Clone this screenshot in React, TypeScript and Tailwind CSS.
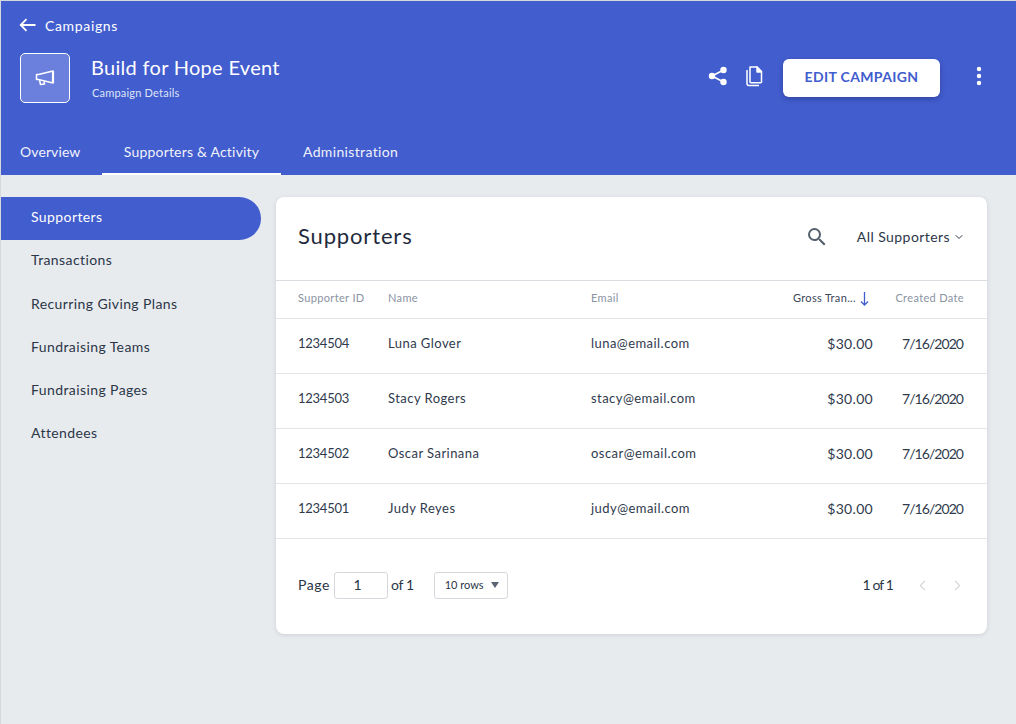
import { ChevronDown, ChevronLeft, ChevronRight, MoreVertical } from "lucide-react";

const sideItems = ["Supporters", "Transactions", "Recurring Giving Plans", "Fundraising Teams", "Fundraising Pages", "Attendees"];

const rows = [
  { id: "1234504", name: "Luna Glover", email: "luna@email.com" },
  { id: "1234503", name: "Stacy Rogers", email: "stacy@email.com" },
  { id: "1234502", name: "Oscar Sarinana", email: "oscar@email.com" },
  { id: "1234501", name: "Judy Reyes", email: "judy@email.com" },
];

export default function App() {
  return (
    <div className="w-[1016px] h-[724px] overflow-hidden bg-[#e8ebee] border-t border-l border-[#d5d8dc] font-['Lato',sans-serif] text-[#2b3648]">
      {/* Header */}
      <header className="h-[174px] bg-[#425dce] text-white flex flex-col">
        <div className="flex items-center pl-[18px] pt-[13px] pb-[1px] h-[36px]">
          <svg width="17" height="14" viewBox="0 0 17 14" fill="none" stroke="white" strokeWidth="1.8">
            <path d="M16.5 7H2M7.5 1.2 1.7 7l5.8 5.8" />
          </svg>
          <span className="ml-[9px] text-[14px] tracking-[0.65px]">Campaigns</span>
        </div>
        <div className="flex items-center pl-[19px] pt-[16px]">
          <div className="w-[50px] h-[50px] rounded-[5px] border border-white bg-[#6a80dc] flex items-center justify-center">
            <svg width="20" height="16" viewBox="0 0 20 16" fill="none" stroke="white" strokeWidth="1.5" strokeLinejoin="round">
              <path d="M1.5 4.5h2L18 1v12L3.500 9.500h-2z" />
              <path d="M18 1v12" strokeWidth="2.2" />
              <path d="M4.500 10 5.500 14.500 9.500 14 9 11.500" />
            </svg>
          </div>
          <div className="ml-[21px] pb-[3px]">
            <div className="text-[20px] leading-[26px] tracking-[0.3px]">Build for Hope Event</div>
            <div className="text-[11px] leading-[14px] mt-[6px] ml-[1px] text-[#dfe4f7] tracking-[0.2px]">Campaign Details</div>
          </div>
          <div className="ml-auto flex items-center">
            <svg className="mb-[4px]" width="20" height="20" viewBox="0 0 20 20" fill="white" stroke="white" strokeWidth="1.6">
              <circle cx="15.5" cy="4" r="2.4" />
              <circle cx="4" cy="10" r="2.4" />
              <circle cx="15.5" cy="16" r="2.4" />
              <path d="M15.5 4 4 10l11.5 6" fill="none" />
            </svg>
            <svg className="ml-[17px] mb-[4px]" width="18" height="21" viewBox="0 0 18 21" fill="none" stroke="white" strokeWidth="1.5" strokeLinejoin="round">
              <path d="M2 4v13.5a2 2 0 0 0 2 2h10" />
              <path d="M5 1h7l4.5 4.5V16a.8.8 0 0 1-.8.8H5.8A.8.8 0 0 1 5 16z" />
              <path d="M12 1v5h4.5z" fill="white" />
            </svg>
            <button className="ml-[20px] w-[157px] h-[38px] rounded-[6px] bg-white text-[#425dce] text-[14px] font-bold tracking-[0.35px] shadow-[0_2px_5px_rgba(20,30,80,0.35)]">
              <span className="block mb-[4px]">EDIT CAMPAIGN</span>
            </button>
            <MoreVertical className="ml-[27px] mr-[25px] mb-[4px]" size={24} strokeWidth={2.4} />
          </div>
        </div>
        <nav className="mt-auto flex h-[46px] text-[14px] text-[#f0f2fb] tracking-[0.35px]">
          <div className="w-[101px] pl-[19px] pt-[12px] tracking-[0.1px]">Overview</div>
          <div className="w-[179px] pt-[12px] text-center border-b-[2px] border-white tracking-[0.2px]">Supporters &amp; Activity</div>
          <div className="pl-[22px] pt-[12px]">Administration</div>
        </nav>
      </header>

      <div className="flex pt-[22px]">
        {/* Sidebar */}
        <aside className="w-[275px] shrink-0 text-[14px] tracking-[0.4px]">
          {sideItems.map((item, i) => (
            <div
              key={item}
              className={
                i === 0
                  ? "w-[260px] h-[43px] flex items-center pl-[30px] pb-[5px] rounded-r-full bg-[#425dce] text-white"
                  : i === 1
                    ? "w-[260px] h-[43.2px] flex items-center pl-[30px] pb-[5px] text-[#2b3648]"
                    : "w-[260px] h-[43.2px] flex items-center pl-[30px] pb-[3px] text-[#2b3648]"
              }
            >
              {item}
            </div>
          ))}
        </aside>

        {/* Card */}
        <main className="w-[711px] h-[437px] bg-white rounded-[8px] shadow-[0_1px_4px_rgba(40,50,70,0.15)]">
          <div className="h-[84px] flex items-center pl-[22px] pb-[4px] border-b border-[#d9dce1]">
            <h1 className="mb-[2px] text-[22px] tracking-[0.85px] text-[#1f2b3d]">Supporters</h1>
            <svg className="ml-auto" width="24" height="24" viewBox="0 0 24 24" fill="#55606f">
              <path d="M15.5 14h-.79l-.28-.27A6.471 6.471 0 0 0 16 9.5 6.5 6.5 0 1 0 9.5 16c1.61 0 3.09-.59 4.23-1.57l.27.28v.79l5 4.99L20.49 19l-4.99-5zm-6 0C7.01 14 5 11.99 5 9.5S7.01 5 9.5 5 14 7.01 14 9.5 11.99 14 9.5 14z" />
            </svg>
            <span className="ml-[28px] text-[14px] tracking-[0.43px]">All Supporters</span>
            <ChevronDown className="ml-[3px] mr-[22px]" size={12} strokeWidth={2} />
          </div>

          <div className="h-[38px] flex items-center pl-[22px] pr-[23px] pb-[2px] text-[11px] tracking-[0.35px] border-b border-[#e3e5e9] text-[#8a93a2]">
            <div className="w-[90px]">Supporter ID</div>
            <div className="w-[203px]">Name</div>
            <div className="w-[170px]">Email</div>
            <div className="w-[112px] flex items-center justify-end text-[#3c4657]">
              <span>Gross Tran...</span>
              <svg className="ml-[4px] mr-[4px]" width="9" height="15" viewBox="0 0 9 15" fill="none" stroke="#425dce" strokeWidth="1.3">
                <path d="M4.5 1v13M1 10.5 4.5 14 8 10.5" />
              </svg>
            </div>
            <div className="flex-1 text-right">Created Date</div>
          </div>

          {rows.map((row) => (
            <div key={row.id} className="h-[55px] flex items-center pl-[22px] pr-[24px] pb-[5px] text-[13px] tracking-[0.45px] border-b border-[#e3e5e9] text-[#2f3a4c]">
              <div className="w-[90px] tracking-[-0.25px]">{row.id}</div>
              <div className="w-[203px]">{row.name}</div>
              <div className="w-[170px]">{row.email}</div>
              <div className="w-[112px] text-right text-[14px] tracking-[0.3px]">$30.00</div>
              <div className="flex-1 text-right text-[14px] tracking-[-0.95px]">7/16/2020</div>
            </div>
          ))}

          <div className="h-[93px] flex items-center pl-[22px] pr-[22px] text-[14px]">
            <span className="mb-[3px] tracking-[0.6px]">Page</span>
            <div className="ml-[4px] w-[54px] h-[27px] border border-[#d5d8dd] rounded-[3px] flex items-center justify-center pr-[7px] pb-[3px]">1</div>
            <span className="ml-[3px] mb-[3px] tracking-[-0.4px]">of 1</span>
            <div className="ml-[20px] w-[74px] h-[27px] border border-[#d5d8dd] rounded-[3px] flex items-center pl-[10px] pb-[1px] text-[11px]">
              <span>10 rows</span>
              <span className="ml-[7px] w-0 h-0 border-x-[4px] border-x-transparent border-t-[6px] border-t-[#5a6473]" />
            </div>
            <span className="ml-auto mb-[3px] tracking-[-0.9px]">1 of 1</span>
            <ChevronLeft className="ml-[21px] mb-[1px] text-[#d4d6da]" size={17} strokeWidth={1.5} />
            <ChevronRight className="ml-[18px] mr-[-1px] mb-[1px] text-[#d4d6da]" size={17} strokeWidth={1.5} />
          </div>
        </main>
      </div>
    </div>
  );
}
